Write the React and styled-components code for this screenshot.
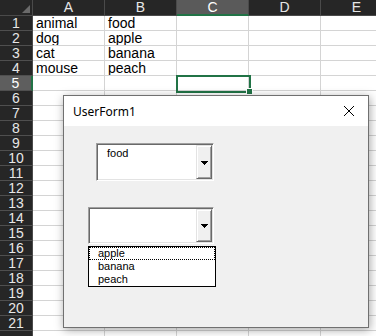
import React from "react";
import styled, { createGlobalStyle, css } from "styled-components";

const Global = createGlobalStyle`
  html, body { margin: 0; padding: 0; background: #fff; overflow: hidden; }
  body { width: 376px; height: 336px; }
  * { box-sizing: border-box; }
`;

const Screen = styled.div`
  position: relative;
  width: 376px;
  height: 336px;
  overflow: hidden;
  font-family: "Liberation Sans", Arial, sans-serif;
`;

const Grid = styled.div`
  display: grid;
  grid-template-columns: 33px repeat(5, 72px);
  grid-template-rows: 16px repeat(22, 15px);
  width: 393px;
`;

const Corner = styled.div`
  position: relative;
  background: #262626;
  border-right: 1px solid #4a4a4a;
  border-bottom: 1px solid #4a4a4a;
  &::after {
    content: "";
    position: absolute;
    right: 2px;
    bottom: 2px;
    width: 0;
    height: 0;
    border-left: 8px solid transparent;
    border-bottom: 8px solid #6a6a6a;
  }
`;

const ColHead = styled.div`
  background: ${(p) => (p.$active ? "#5a5a5a" : "#262626")};
  color: ${(p) => (p.$active ? "#ffffff" : "#e6e6e6")};
  border-right: 1px solid #4a4a4a;
  border-bottom: ${(p) => (p.$active ? "2px solid #217346" : "1px solid #4a4a4a")};
  font-size: 14px;
  line-height: 13px;
  text-align: center;
  padding-top: 1px;
  overflow: hidden;
`;

const RowHead = styled.div`
  background: ${(p) => (p.$active ? "#5e5e5e" : "#262626")};
  color: ${(p) => (p.$active ? "#ffffff" : "#e6e6e6")};
  border-bottom: 1px solid #4f4f4f;
  border-right: ${(p) => (p.$active ? "2px solid #217346" : "1px solid #4a4a4a")};
  font-size: 14px;
  line-height: 14px;
  text-align: center;
  overflow: hidden;
`;

const Cell = styled.div`
  background: #fff;
  border-right: 1px solid #d4d4d4;
  border-bottom: 1px solid #d4d4d4;
  font-size: 14px;
  line-height: 14px;
  color: #000;
  padding-left: 3px;
  white-space: nowrap;
  overflow: hidden;
`;

const Selection = styled.div`
  position: absolute;
  left: 176px;
  top: 75px;
  width: 75px;
  height: 18px;
  border: 2px solid #217346;
  &::after {
    content: "";
    position: absolute;
    right: -4px;
    bottom: -4px;
    width: 5px;
    height: 5px;
    background: #217346;
    border: 1px solid #fff;
  }
`;

const Form = styled.div`
  position: absolute;
  left: 63px;
  top: 95px;
  width: 306px;
  height: 233px;
  border: 1px solid #707070;
  background: #f0f0f0;
  box-shadow: 1px 2px 9px rgba(0, 0, 0, 0.35);
  display: flex;
  flex-direction: column;
  font-family: "Liberation Sans", Arial, sans-serif;
`;

const TitleBar = styled.div`
  height: 30px;
  background: #fff;
  display: flex;
  align-items: center;
  justify-content: space-between;
  padding: 0 9px 0 9px;
  font-family: "Noto Sans", "Open Sans", sans-serif;
  font-size: 12px;
  color: #000;
`;

const Close = styled.svg`
  width: 12px;
  height: 12px;
  margin-right: 4px;
`;

const Body = styled.div`
  flex: 1;
  display: flex;
  flex-direction: column;
  align-items: flex-start;
  padding-top: 17px;
`;

const Combo = styled.div`
  display: flex;
  width: ${(p) => p.$w}px;
  height: ${(p) => p.$h}px;
  margin-left: ${(p) => p.$left}px;
  margin-top: ${(p) => p.$top}px;
  background: #fff;
  border: 1px solid;
  border-color: #a0a0a0 #ffffff #ffffff #a0a0a0;
  box-shadow: inset 1px 1px 0 #696969, inset -1px -1px 0 #e3e3e3;
`;

const ComboText = styled.div`
  flex: 1;
  padding: 3px 0 0 10px;
  font-size: 11px;
  line-height: 13px;
  color: #000;
`;

const DropButton = styled.div`
  width: 16px;
  margin: 1px 1px 1px 0;
  background: #f0f0f0;
  border: 1px solid;
  border-color: #e3e3e3 #696969 #696969 #e3e3e3;
  box-shadow: inset 1px 1px 0 #ffffff, inset -1px -1px 0 #a0a0a0;
  display: flex;
  align-items: center;
  justify-content: center;
  padding-top: 1px;
`;

const List = styled.div`
  margin-left: 24px;
  margin-top: 2px;
  width: 128px;
  background: #fff;
  border: 1px solid #000;
  display: flex;
  flex-direction: column;
`;

const Item = styled.div`
  height: 13px;
  font-size: 11px;
  line-height: 13px;
  padding-left: 9px;
  color: #000;
  ${(p) =>
    p.$focus &&
    css`
      outline: 1px dotted #000;
      outline-offset: -1px;
    `}
`;

const Arrow = () => (
  <svg width="7" height="4" viewBox="0 0 7 4" shapeRendering="crispEdges">
    <path d="M0 0h7v1H0zM1 1h5v1H1zM2 2h3v1H2zM3 3h1v1H3z" fill="#000" />
  </svg>
);

const ComboBox = ({ w, h, left, top, text }) => (
  <Combo $w={w} $h={h} $left={left} $top={top}>
    <ComboText>{text}</ComboText>
    <DropButton>
      <Arrow />
    </DropButton>
  </Combo>
);

const cols = ["A", "B", "C", "D", "E"];
const data = [
  ["animal", "food"],
  ["dog", "apple"],
  ["cat", "banana"],
  ["mouse", "peach"],
];

export default function App() {
  const rows = [];
  for (let r = 1; r <= 22; r++) {
    rows.push(
      <RowHead key={`h${r}`} $active={r === 5}>
        {r < 22 ? r : ""}
      </RowHead>
    );
    for (let c = 0; c < 5; c++) {
      const v = data[r - 1] ? data[r - 1][c] || "" : "";
      rows.push(<Cell key={`${r}-${c}`}>{v}</Cell>);
    }
  }
  return (
    <Screen>
      <Global />
      <Grid>
        <Corner />
        {cols.map((c) => (
          <ColHead key={c} $active={c === "C"}>
            {c}
          </ColHead>
        ))}
        {rows}
      </Grid>
      <Selection />
      <Form>
        <TitleBar>
          <span>UserForm1</span>
          <Close viewBox="0 0 12 12">
            <path d="M1 1L11 11M11 1L1 11" stroke="#000" strokeWidth="1" fill="none" />
          </Close>
        </TitleBar>
        <Body>
          <ComboBox w={118} h={38} left={32} top={0} text="food" />
          <ComboBox w={126} h={37} left={24} top={26} text="" />
          <List>
            <Item $focus>apple</Item>
            <Item>banana</Item>
            <Item>peach</Item>
          </List>
        </Body>
      </Form>
    </Screen>
  );
}
